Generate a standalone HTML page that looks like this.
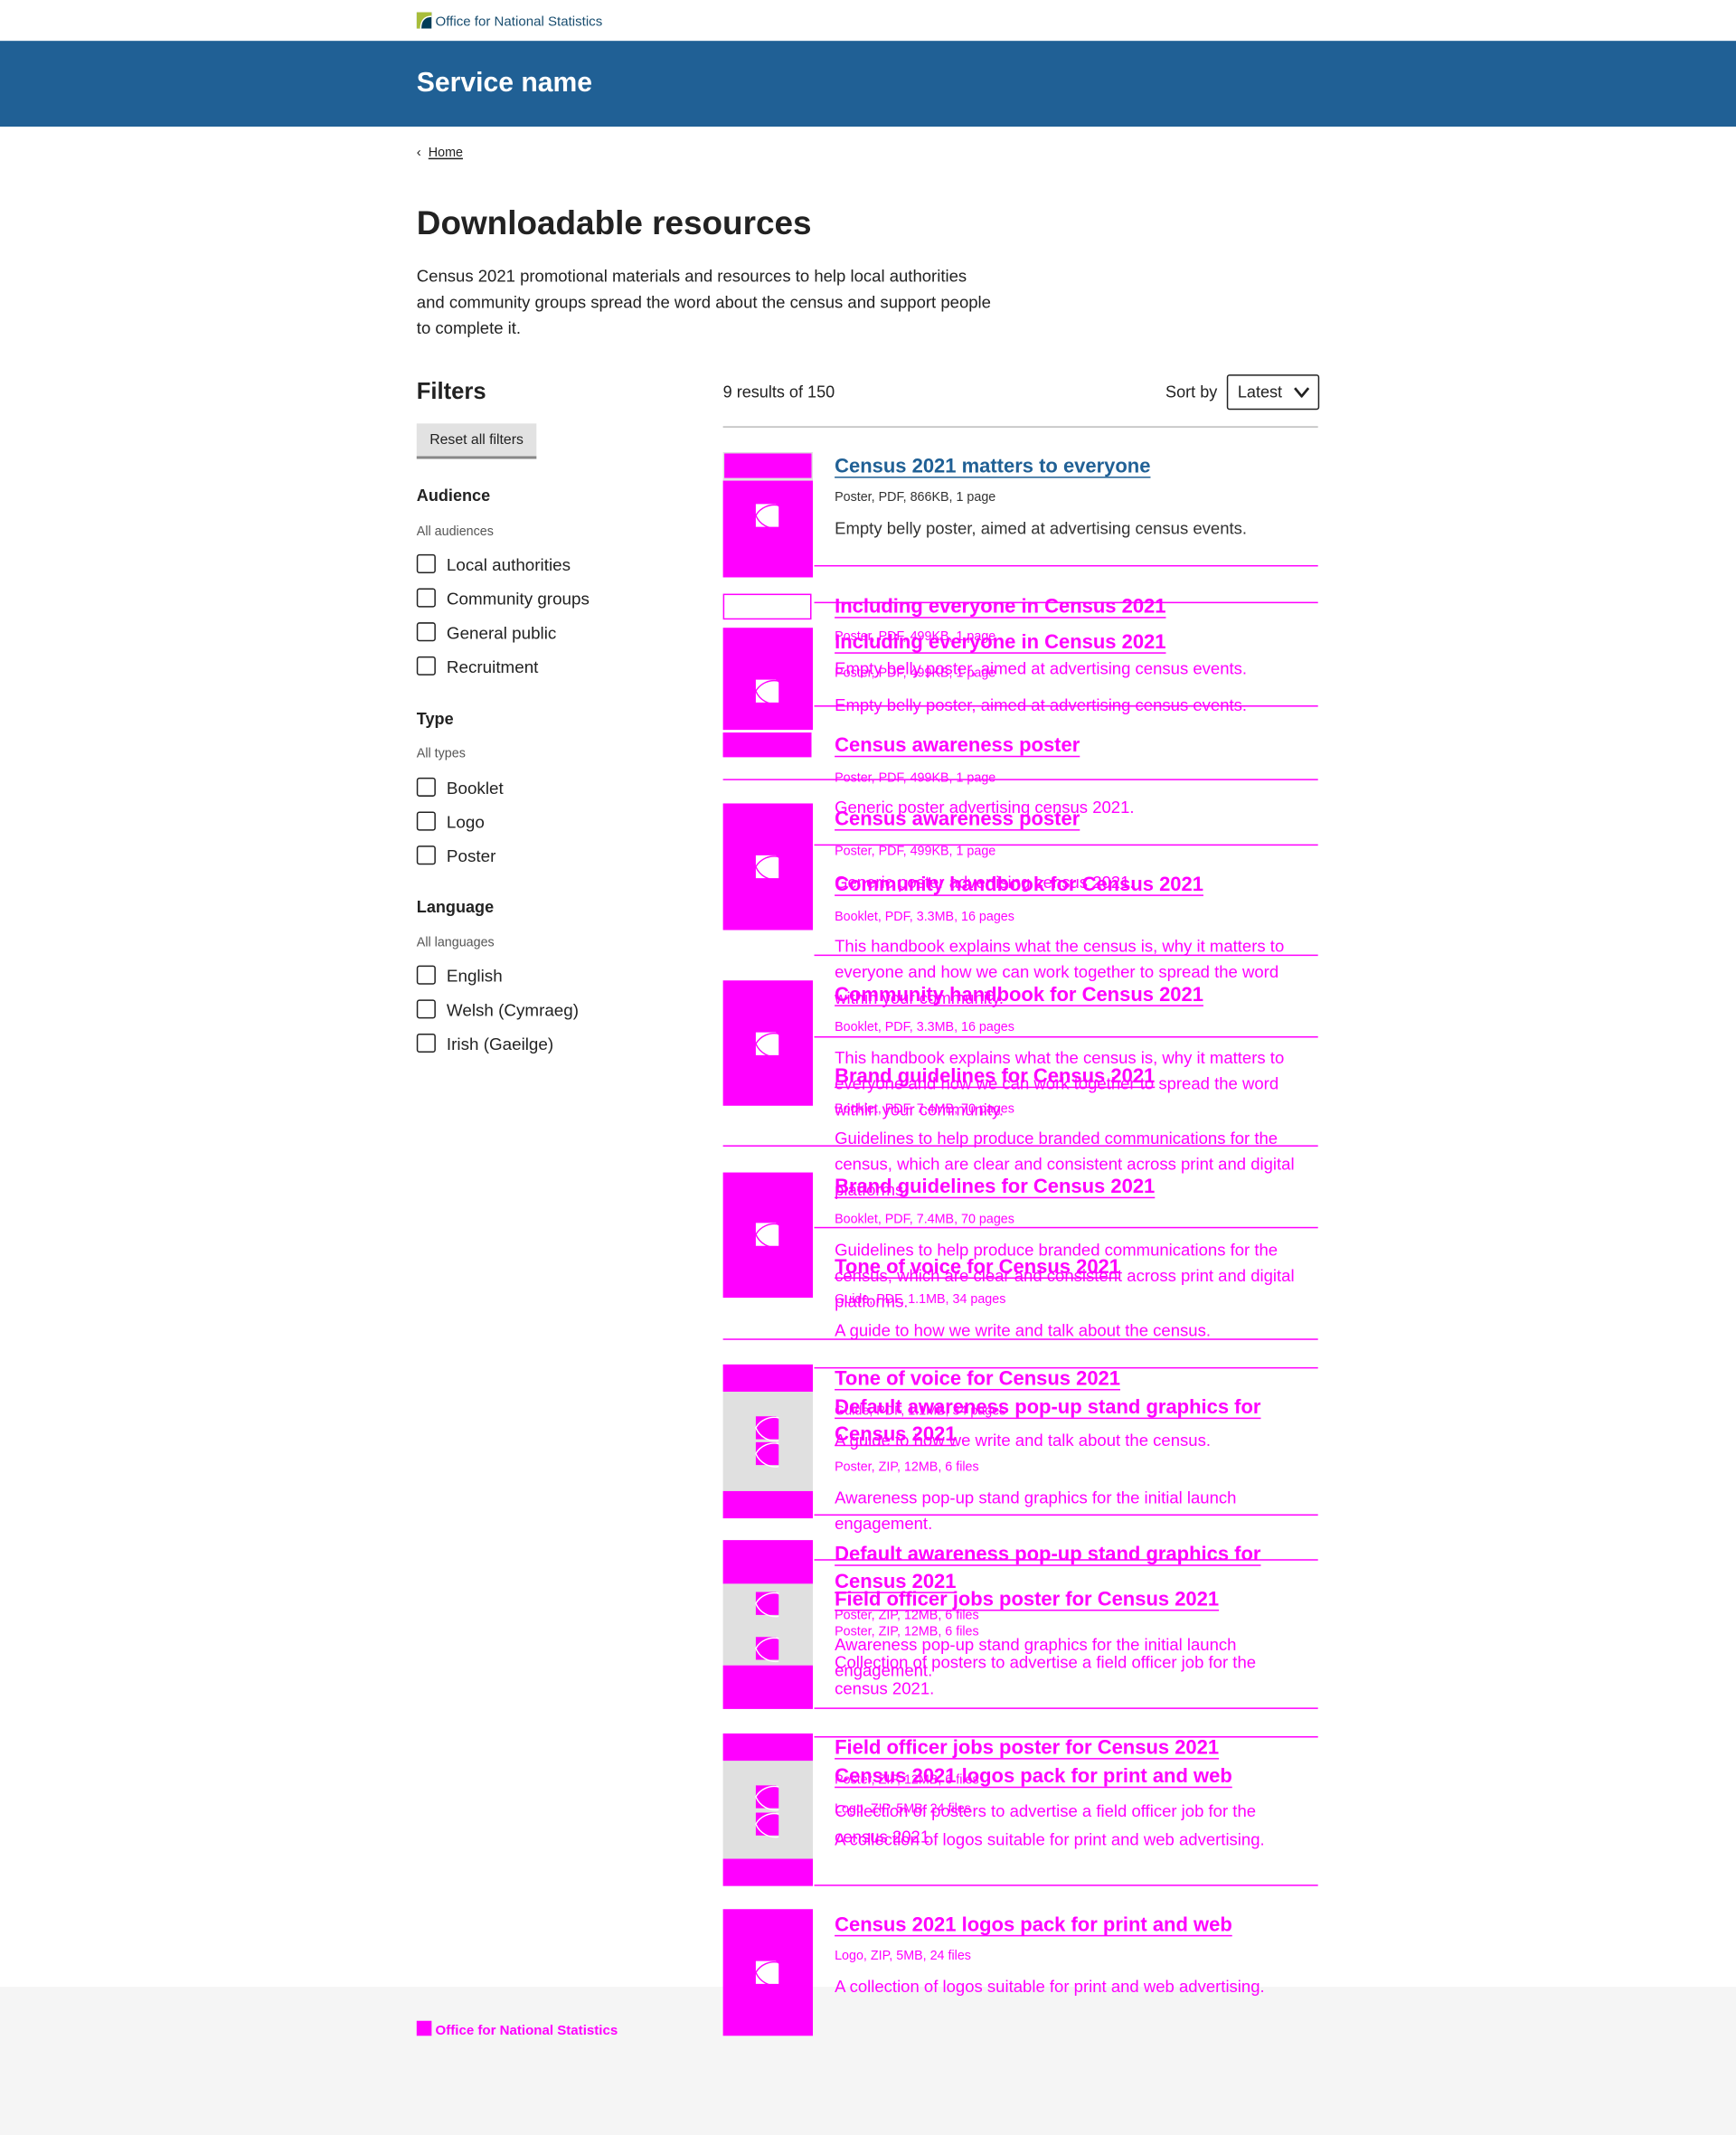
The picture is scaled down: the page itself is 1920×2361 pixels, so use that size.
<!DOCTYPE html>
<html><head><meta charset="utf-8"><style>
html,body{margin:0;padding:0;background:#fff;}
body{width:1920px;height:2361px;overflow:hidden;position:relative;font-family:"Liberation Sans",Arial,sans-serif;color:#222;}
#w{position:absolute;left:0;top:0;width:1275px;height:1568px;transform:scale(1.50588);transform-origin:0 0;}
.a{position:absolute;white-space:nowrap;}
.m{color:#f0f;}
.t{font-size:14.6px;font-weight:bold;line-height:20px;text-decoration:underline;text-decoration-thickness:1px;text-underline-offset:3px;}
.mt{font-size:9.5px;line-height:14px;}
.d{font-size:12.3px;line-height:19px;}
.r{position:absolute;height:1px;background:#f0f;}
.th{position:absolute;left:531px;width:66px;}
.mg{background:#f0f;}
.cb{position:absolute;left:306px;width:12px;height:12px;border:1.5px solid #222;border-radius:2px;}
.cl{position:absolute;left:328px;font-size:12.5px;line-height:16px;}
.sm{font-size:9.5px;color:#555;}
</style></head><body><div id="w">
<div class="a" style="left:306px;top:9px;font-size:10px;line-height:12px;color:#1a4e70;"><svg width="11" height="12" viewBox="0 0 11 12" style="vertical-align:-2px"><rect width="11" height="12" fill="#003c57"/><path d="M0 0H11V3C6 3 3 6 3 12H0Z" fill="#a8bd3a"/><path d="M11 3C6 3 3 6 3 12" stroke="#fff" fill="none" stroke-width="1"/></svg> Office for National Statistics</div>
<div style="position:absolute;left:0;top:30px;width:1275px;height:63px;background:#206095;"></div>
<div class="a" style="left:306px;top:48px;font-size:20px;font-weight:bold;color:#fff;line-height:26px;">Service name</div>
<div class="a" style="left:306px;top:106px;font-size:9.5px;line-height:14px;"><span style="font-size:10px">&#8249;</span>&nbsp; <span style="text-decoration:underline">Home</span></div>
<div class="a" style="left:306px;top:149px;font-size:24.5px;font-weight:bold;line-height:32px;">Downloadable resources</div>
<div class="a" style="left:306px;top:194px;font-size:12.3px;line-height:19px;">Census 2021 promotional materials and resources to help local authorities<br>and community groups spread the word about the census and support people<br>to complete it.</div>
<div class="a" style="left:306px;top:277px;font-size:17px;font-weight:bold;line-height:22px;">Filters</div>
<div class="a" style="left:306px;top:311px;width:88px;height:24px;background:#e2e2e2;border-bottom:2px solid #888;font-size:10.5px;line-height:24px;text-align:center;">Reset all filters</div>
<div class="a" style="left:306px;top:356px;font-size:12px;font-weight:bold;line-height:16px;">Audience</div>
<div class="a sm" style="left:306px;top:384px;line-height:14px;">All audiences</div>
<div class="cb" style="top:407px"></div><div class="cl a" style="top:407px">Local authorities</div>
<div class="cb" style="top:432px"></div><div class="cl a" style="top:432px">Community groups</div>
<div class="cb" style="top:457px"></div><div class="cl a" style="top:457px">General public</div>
<div class="cb" style="top:482px"></div><div class="cl a" style="top:482px">Recruitment</div>
<div class="a" style="left:306px;top:520px;font-size:12px;font-weight:bold;line-height:16px;">Type</div>
<div class="a sm" style="left:306px;top:547px;line-height:14px;">All types</div>
<div class="cb" style="top:571px"></div><div class="cl a" style="top:571px">Booklet</div>
<div class="cb" style="top:596px"></div><div class="cl a" style="top:596px">Logo</div>
<div class="cb" style="top:621px"></div><div class="cl a" style="top:621px">Poster</div>
<div class="a" style="left:306px;top:658px;font-size:12px;font-weight:bold;line-height:16px;">Language</div>
<div class="a sm" style="left:306px;top:686px;line-height:14px;">All languages</div>
<div class="cb" style="top:709px"></div><div class="cl a" style="top:709px">English</div>
<div class="cb" style="top:734px"></div><div class="cl a" style="top:734px">Welsh (Cymraeg)</div>
<div class="cb" style="top:759px"></div><div class="cl a" style="top:759px">Irish (Gaeilge)</div>
<div class="a" style="left:531px;top:280px;font-size:12px;line-height:16px;">9 results of 150</div>
<div class="a" style="left:856px;top:280px;font-size:12px;line-height:16px;">Sort by</div>
<div class="a" style="left:901px;top:275px;width:66px;height:24px;border:1px solid #222;border-radius:2px;font-size:12px;line-height:24px;"><span style="margin-left:7px">Latest</span><svg width="12" height="8" viewBox="0 0 12 8" style="position:absolute;right:6px;top:8px"><path d="M1 1L6 7L11 1" stroke="#222" stroke-width="1.8" fill="none"/></svg></div>
<div style="position:absolute;left:531px;top:313px;width:437px;height:1px;background:#bbb;"></div>
<div style="position:absolute;left:0;top:1459px;width:1275px;height:109px;background:#f5f5f5;"></div>
<div class="a m" style="left:306px;top:1484px;font-size:10px;font-weight:bold;line-height:12px;"><span style="display:inline-block;width:11px;height:11px;background:#f0f;vertical-align:-1px"></span> Office for National Statistics</div>

<div class="th" style="top:332px;height:92px;background:#e0e0e0;"></div>
<div class="th mg" style="top:333px;height:18px;left:532px;width:64px;"></div>
<div class="th mg" style="top:353px;height:71px;"></div>
<div class="th" style="top:436px;height:17px;border:1.5px solid #f0f;width:63px;"></div>
<div class="th mg" style="top:461px;height:75px;"></div>
<div class="th mg" style="top:538px;height:16px;border:1.5px solid #f0f;width:63px;"></div>
<div class="th mg" style="top:590px;height:93px;"></div>
<div class="th mg" style="top:720px;height:92px;"></div>
<div class="th mg" style="top:861px;height:92px;"></div>
<div class="th" style="top:1002px;height:113px;background:#e0e0e0;"></div>
<div class="th mg" style="top:1002px;height:20px;"></div><div class="th mg" style="top:1095px;height:20px;"></div>
<div class="th" style="top:1131px;height:124px;background:#e0e0e0;"></div>
<div class="th mg" style="top:1131px;height:32px;"></div><div class="th mg" style="top:1223px;height:32px;"></div>
<div class="th" style="top:1273px;height:112px;background:#e0e0e0;"></div>
<div class="th mg" style="top:1273px;height:20px;"></div><div class="th mg" style="top:1365px;height:20px;"></div>
<div class="th mg" style="top:1402px;height:93px;"></div>
<svg width="0" height="0" style="position:absolute"><defs><symbol id="iw" viewBox="0 0 20 20"><path d="M2 2H16L18 4V18H2Z" fill="#fff"/><path d="M18 3A15 15 0 0 0 2 10A15 15 0 0 0 18 19" stroke="#f0f" stroke-width="0.9" fill="none"/></symbol><symbol id="im" viewBox="0 0 20 20"><path d="M2 2H16L18 4V18H2Z" fill="#f0f"/><path d="M18 3A15 15 0 0 0 2 10A15 15 0 0 0 18 19" stroke="#fff" stroke-width="0.9" fill="none"/></symbol></defs></svg>
<svg class="a" style="left:553px;top:368px" width="21" height="21"><use href="#iw"/></svg>
<svg class="a" style="left:553px;top:497px" width="21" height="21"><use href="#iw"/></svg>
<svg class="a" style="left:553px;top:626px" width="21" height="21"><use href="#iw"/></svg>
<svg class="a" style="left:553px;top:756px" width="21" height="21"><use href="#iw"/></svg>
<svg class="a" style="left:553px;top:896px" width="21" height="21"><use href="#iw"/></svg>
<svg class="a" style="left:553px;top:1438px" width="21" height="21"><use href="#iw"/></svg>
<svg class="a" style="left:553px;top:1038px" width="21" height="21"><use href="#im"/></svg>
<svg class="a" style="left:553px;top:1057px" width="21" height="21"><use href="#im"/></svg>
<svg class="a" style="left:553px;top:1167px" width="21" height="21"><use href="#im"/></svg>
<svg class="a" style="left:553px;top:1200px" width="21" height="21"><use href="#im"/></svg>
<svg class="a" style="left:553px;top:1309px" width="21" height="21"><use href="#im"/></svg>
<svg class="a" style="left:553px;top:1329px" width="21" height="21"><use href="#im"/></svg>
<div class="r" style="left:598px;width:370px;top:415px"></div>
<div class="r" style="left:598px;width:370px;top:442px"></div>
<div class="r" style="left:598px;width:370px;top:518px"></div>
<div class="r" style="left:531px;width:437px;top:572px"></div>
<div class="r" style="left:598px;width:370px;top:620px"></div>
<div class="r" style="left:598px;width:370px;top:701px"></div>
<div class="r" style="left:598px;width:370px;top:761px"></div>
<div class="r" style="left:531px;width:437px;top:841px"></div>
<div class="r" style="left:598px;width:370px;top:901px"></div>
<div class="r" style="left:531px;width:437px;top:983px"></div>
<div class="r" style="left:598px;width:370px;top:1004px"></div>
<div class="r" style="left:598px;width:370px;top:1112px"></div>
<div class="r" style="left:598px;width:370px;top:1145px"></div>
<div class="r" style="left:598px;width:370px;top:1254px"></div>
<div class="r" style="left:598px;width:370px;top:1275px"></div>
<div class="r" style="left:598px;width:370px;top:1384px"></div>
<div class="a t" style="left:613px;top:333px;color:#206095">Census 2021 matters to everyone</div>
<div class="a mt" style="left:613px;top:359px;color:#333">Poster, PDF, 866KB, 1 page</div>
<div class="a d" style="left:613px;top:379px;color:#333">Empty belly poster, aimed at advertising census events.</div>
<div class="m">
<div class="a t" style="left:613px;top:436px">Including everyone in Census 2021</div>
<div class="a t" style="left:613px;top:462px">Including everyone in Census 2021</div>
<div class="a mt" style="left:613px;top:461px">Poster, PDF, 499KB, 1 page</div>
<div class="a mt" style="left:613px;top:488px">Poster, PDF, 499KB, 1 page</div>
<div class="a d" style="left:613px;top:482px">Empty belly poster, aimed at advertising census events.</div>
<div class="a d" style="left:613px;top:509px">Empty belly poster, aimed at advertising census events.</div>
<div class="a t" style="left:613px;top:538px">Census awareness poster</div>
<div class="a mt" style="left:613px;top:565px">Poster, PDF, 499KB, 1 page</div>
<div class="a d" style="left:613px;top:584px">Generic poster advertising census 2021.</div>
<div class="a t" style="left:613px;top:592px">Census awareness poster</div>
<div class="a mt" style="left:613px;top:619px">Poster, PDF, 499KB, 1 page</div>
<div class="a d" style="left:613px;top:639px">Generic poster advertising census 2021.</div>
<div class="a t" style="left:613px;top:640px">Community handbook for Census 2021</div>
<div class="a mt" style="left:613px;top:667px">Booklet, PDF, 3.3MB, 16 pages</div>
<div class="a d" style="left:613px;top:686px">This handbook explains what the census is, why it matters to<br>everyone and how we can work together to spread the word<br>within your community.</div>
<div class="a t" style="left:613px;top:721px">Community handbook for Census 2021</div>
<div class="a mt" style="left:613px;top:748px">Booklet, PDF, 3.3MB, 16 pages</div>
<div class="a d" style="left:613px;top:768px">This handbook explains what the census is, why it matters to<br>everyone and how we can work together to spread the word<br>within your community.</div>
<div class="a t" style="left:613px;top:781px">Brand guidelines for Census 2021</div>
<div class="a mt" style="left:613px;top:808px">Booklet, PDF, 7.4MB, 70 pages</div>
<div class="a d" style="left:613px;top:827px">Guidelines to help produce branded communications for the<br>census, which are clear and consistent across print and digital<br>platforms.</div>
<div class="a t" style="left:613px;top:862px">Brand guidelines for Census 2021</div>
<div class="a mt" style="left:613px;top:889px">Booklet, PDF, 7.4MB, 70 pages</div>
<div class="a d" style="left:613px;top:909px">Guidelines to help produce branded communications for the<br>census, which are clear and consistent across print and digital<br>platforms.</div>
<div class="a t" style="left:613px;top:921px">Tone of voice for Census 2021</div>
<div class="a mt" style="left:613px;top:948px">Guide, PDF, 1.1MB, 34 pages</div>
<div class="a d" style="left:613px;top:968px">A guide to how we write and talk about the census.</div>
<div class="a t" style="left:613px;top:1003px">Tone of voice for Census 2021</div>
<div class="a mt" style="left:613px;top:1030px">Guide, PDF, 1.1MB, 34 pages</div>
<div class="a d" style="left:613px;top:1049px">A guide to how we write and talk about the census.</div>
<div class="a t" style="left:613px;top:1024px">Default awareness pop-up stand graphics for<br>Census 2021</div>
<div class="a mt" style="left:613px;top:1071px">Poster, ZIP, 12MB, 6 files</div>
<div class="a d" style="left:613px;top:1091px">Awareness pop-up stand graphics for the initial launch<br>engagement.</div>
<div class="a t" style="left:613px;top:1132px">Default awareness pop-up stand graphics for<br>Census 2021</div>
<div class="a mt" style="left:613px;top:1180px">Poster, ZIP, 12MB, 6 files</div>
<div class="a d" style="left:613px;top:1199px">Awareness pop-up stand graphics for the initial launch<br>engagement.</div>
<div class="a t" style="left:613px;top:1165px">Field officer jobs poster for Census 2021</div>
<div class="a mt" style="left:613px;top:1192px">Poster, ZIP, 12MB, 6 files</div>
<div class="a d" style="left:613px;top:1212px">Collection of posters to advertise a field officer job for the<br>census 2021.</div>
<div class="a t" style="left:613px;top:1274px">Field officer jobs poster for Census 2021</div>
<div class="a mt" style="left:613px;top:1301px">Poster, ZIP, 12MB, 6 files</div>
<div class="a d" style="left:613px;top:1321px">Collection of posters to advertise a field officer job for the<br>census 2021.</div>
<div class="a t" style="left:613px;top:1295px">Census 2021 logos pack for print and web</div>
<div class="a mt" style="left:613px;top:1322px">Logo, ZIP, 5MB, 24 files</div>
<div class="a d" style="left:613px;top:1342px">A collection of logos suitable for print and web advertising.</div>
<div class="a t" style="left:613px;top:1404px">Census 2021 logos pack for print and web</div>
<div class="a mt" style="left:613px;top:1430px">Logo, ZIP, 5MB, 24 files</div>
<div class="a d" style="left:613px;top:1450px">A collection of logos suitable for print and web advertising.</div>
</div>
</div></body></html>
